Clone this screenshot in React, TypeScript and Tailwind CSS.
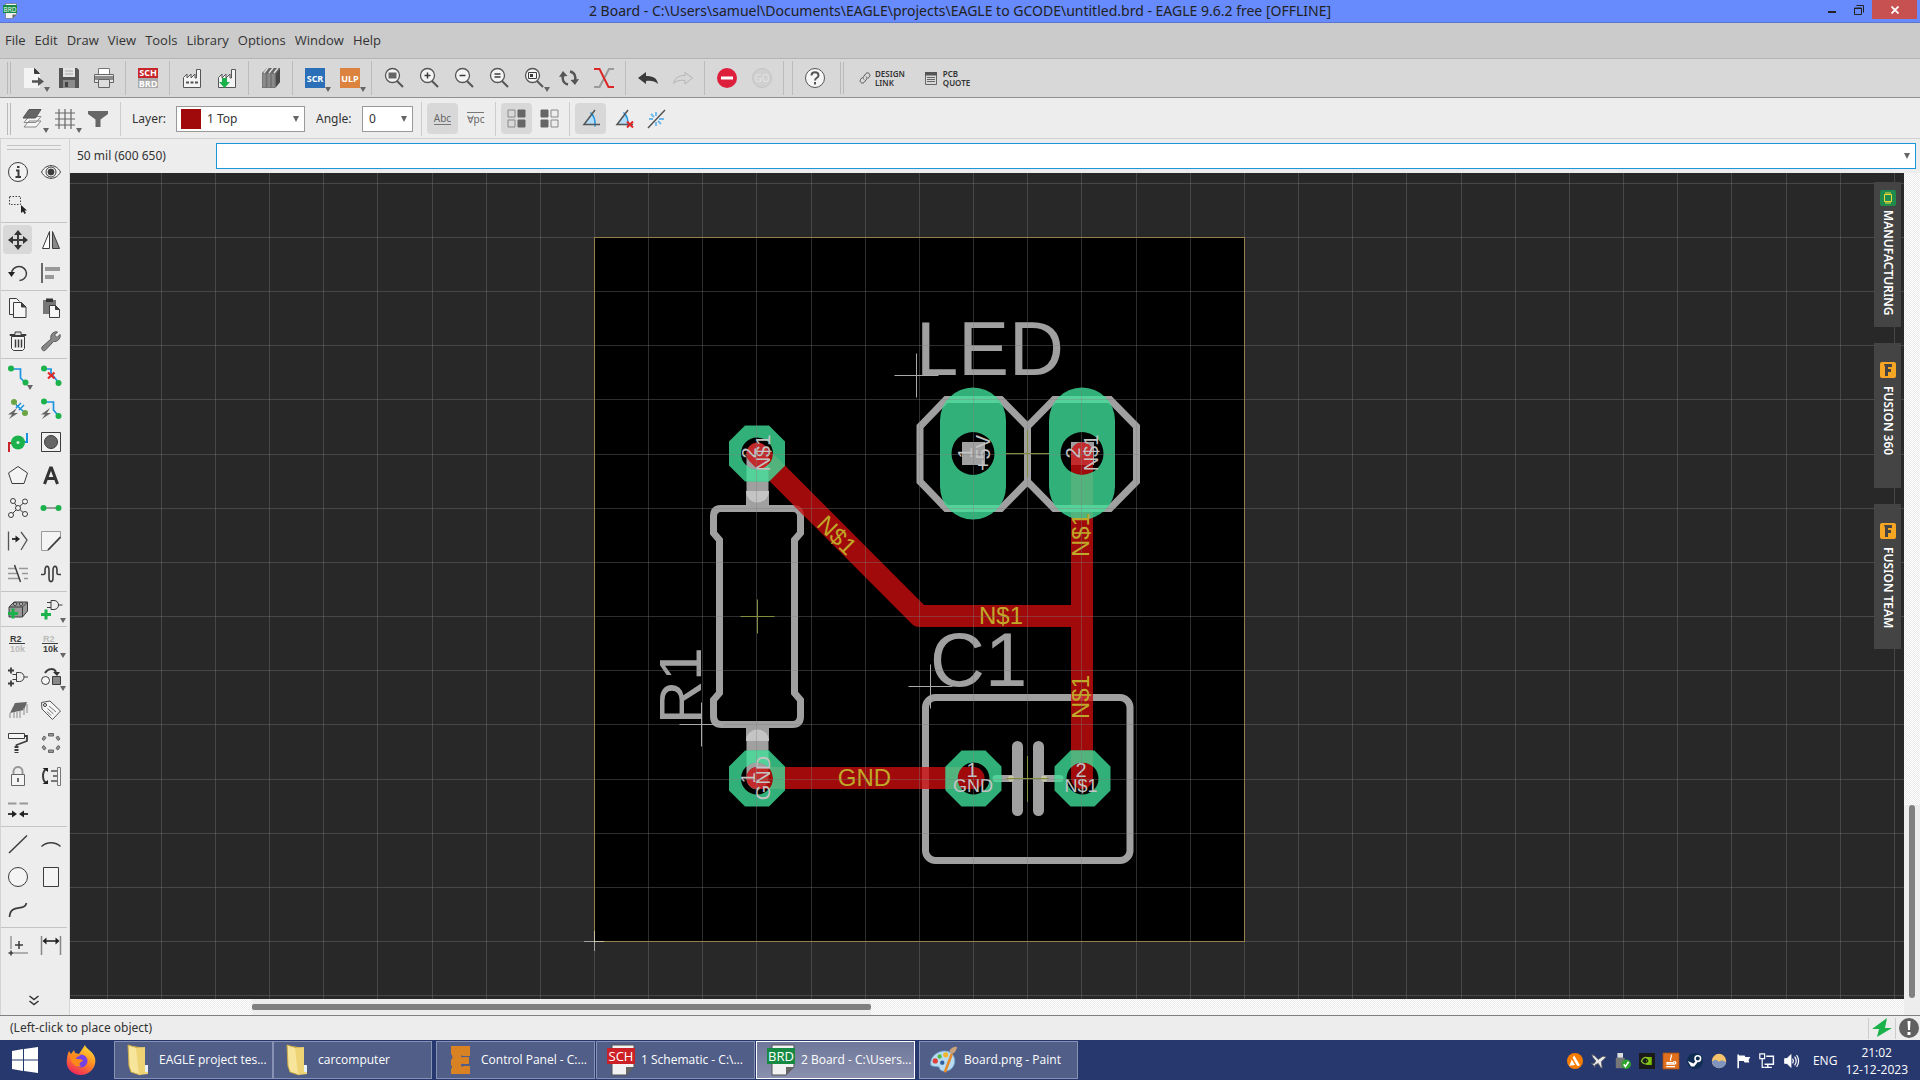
import React from "react";

type Kids = { children?: React.ReactNode };

const D = "#3c3c3c";
const G = "#1bb24b";
const B = "#1a93e0";

function Ic({ children, size = "size-5" }: Kids & { size?: string }) {
  return (
    <svg viewBox="0 0 20 20" className={`${size} shrink-0 overflow-visible`} fill="none" stroke={D} strokeWidth="1" aria-hidden="true">
      {children}
    </svg>
  );
}

function Tri({ x = 23, y = 20 }: { x?: number; y?: number }) {
  return <path d={`M${x - 3} ${y - 1}h6l-3 5z`} fill="#666" stroke="none" />;
}

/* ---------- top toolbar icons ---------- */

const magnifier = (
  <>
    <circle cx="8.5" cy="7.5" r="7" fill="#f4f4f4" stroke="#555" strokeWidth="1.3" />
    <path d="M13 13l6 6" stroke="#555" strokeWidth="2" />
  </>
);

const factory = <path d="M1.5 19.5V9.5L5 6v4l4-4v4l4-4v4h1.5V1.5h4v18z" fill="#f4f4f4" stroke="#555" />;

const fileIcons = [
  {
    name: "New",
    icon: (
      <Ic>
        <path d="M.5.5h10l5 5v14H.5z" fill="#f4f4f4" stroke="#f4f4f4" />
        <path d="M10.5.5l5 5h-5z" fill={D} />
        <path d="M8 13.5h7" stroke="#555" strokeWidth="2.5" />
        <path d="M14 9l6 4.5-6 4.5z" fill="#555" stroke="none" />
        <Tri />
      </Ic>
    ),
  },
  {
    name: "Save",
    icon: (
      <Ic>
        <path d="M0 0h18l2 2v18H0z" fill="#555" stroke="none" />
        <path d="M4 0h12v9H4z" fill="#e4e4e4" stroke="none" />
        <path d="M4 12h12v8H4z" fill="#8b8b8b" stroke="none" />
        <path d="M6 14h3v5H6z" fill="#444" stroke="none" />
        <path d="M6 3h8M6 6h8" stroke="#aaa" />
      </Ic>
    ),
  },
  {
    name: "Print",
    icon: (
      <Ic>
        <path d="M4.5 7V.5h11V7" fill="#fff" stroke="#777" />
        <path d="M.5 6.5h19v8H.5z" fill="#e8e8e8" stroke="#666" />
        <path d="M1 8h18v4H1z" fill="#8b8b8b" stroke="none" />
        <path d="M4.5 11.5h11v8h-11z" fill="#ddd" stroke="#666" />
      </Ic>
    ),
  },
];

const badge = (fill: string, label: string) => (
  <Ic>
    <path d="M0 0h20v20H0z" fill={fill} stroke="none" />
    <text x="10" y="14" textAnchor="middle" fontSize="9" fontWeight="bold" fill="#fff" stroke="none">
      {label}
    </text>
    <Tri />
  </Ic>
);

const topGroups: { name: string; icon: React.ReactNode }[][] = [
  fileIcons,
  [
    {
      name: "Schematic / Board",
      icon: (
        <Ic>
          <path d="M0 0h20v10H0z" fill="#c7252a" stroke="none" />
          <path d="M0 10h20v10H0z" fill="#aaa" stroke="none" />
          <g fill="#fff" stroke="none" fontSize="9" fontWeight="bold" textAnchor="middle">
            <text x="10" y="8">SCH</text>
            <text x="10" y="19">BRD</text>
          </g>
        </Ic>
      ),
    },
  ],
  [
    {
      name: "Manufacturing",
      icon: (
        <Ic>
          {factory}
          <path d="M4 14.5h12" stroke="#555" strokeWidth="2" strokeDasharray="3 1.5" />
        </Ic>
      ),
    },
    {
      name: "CAM",
      icon: (
        <Ic>
          {factory}
          <path d="M5 10h5v4h3l-5.5 6L2 14h3z" fill={G} stroke="none" />
        </Ic>
      ),
    },
  ],
  [
    {
      name: "Library",
      icon: (
        <Ic>
          <path d="M1 5l5-5h13v14l-5 6H1z" fill="#666" stroke="none" />
          <path d="M1.5 5.5h3.5v14H1.5zM6 5.5h3.5v14H6zM10.5 5.5H14v14h-3.5z" fill="#8b8b8b" stroke="#777" />
          <path d="M3 5l4-5M8 5l4-5M13 5l4-5" stroke="#ddd" strokeWidth="1.5" />
          <path d="M15 6l4-5v13l-4 5z" fill="#4a4a4a" stroke="none" />
        </Ic>
      ),
    },
  ],
  [
    { name: "Script", icon: badge("#2a6fb8", "SCR") },
    { name: "ULP", icon: badge("#dc8340", "ULP") },
  ],
  [
    {
      name: "Fit",
      icon: (
        <Ic>
          {magnifier}
          <path d="M4.5 4.5h8v6h-8z" fill="#666" stroke="none" />
        </Ic>
      ),
    },
    { name: "Zoom in", icon: <Ic>{magnifier}<path d="M5.5 7.5h6M8.5 4.5v6" strokeWidth="1.5" /></Ic> },
    { name: "Zoom out", icon: <Ic>{magnifier}<path d="M5.5 7.5h6" strokeWidth="1.5" /></Ic> },
    { name: "Redraw", icon: <Ic>{magnifier}<path d="M5.5 6h6M5.5 9h6" strokeWidth="1.5" /></Ic> },
    {
      name: "Select zoom",
      icon: (
        <Ic>
          {magnifier}
          <path d="M4.5 4.5h8v6h-8z" />
          <path d="M6 6h3v3H6z" fill={D} stroke="none" />
          <Tri />
        </Ic>
      ),
    },
    {
      name: "Refresh",
      icon: (
        <Ic>
          <path d="M9 16.5C4 15.5 3 11 4 7M11 3.5c5 1 6 5.5 5 9.5" stroke="#555" strokeWidth="2.5" />
          <path d="M0 9l4-6 4.5 5zM20 11l-4 6-4.5-5z" fill="#555" stroke="none" />
        </Ic>
      ),
    },
    {
      name: "Cross probe",
      icon: (
        <Ic>
          <path d="M20 1h-5L5.5 19H0" stroke="#999" strokeWidth="2" />
          <path d="M0 1h5.5l9 18H20" stroke="#dc2626" strokeWidth="2" />
        </Ic>
      ),
    },
  ],
  [
    {
      name: "Undo",
      icon: (
        <Ic>
          <path d="M0 10l8-6v4c7 0 11 2 12 8-3-3-7-3.5-12-3v3z" fill="#3a3a3a" stroke="none" />
        </Ic>
      ),
    },
    {
      name: "Redo",
      icon: (
        <Ic>
          <path d="M19.5 10L12 4.5v3C5 7.5 2 10 .5 15.5 4 12.5 7 12 12 12.5V16z" fill="#d6d6d6" stroke="#b5b5b5" />
        </Ic>
      ),
    },
  ],
  [
    {
      name: "Stop",
      icon: (
        <Ic>
          <circle cx="10" cy="10" r="10" fill="#de1f3c" stroke="none" />
          <path d="M4 10h12" stroke="#fff" strokeWidth="3" />
        </Ic>
      ),
    },
    {
      name: "Go",
      icon: (
        <Ic>
          <circle cx="10" cy="10" r="9.5" fill="#d0d0d0" stroke="#c4c4c4" />
          <text x="10" y="14" textAnchor="middle" fontSize="10" fill="#e4e4e4" stroke="none">GO</text>
        </Ic>
      ),
    },
  ],
];

const angleBase = (
  <>
    <path d="M3 15.5L10.5 5c3 3 4 6.5 4 10.5z" fill="#b4dcf7" stroke="none" />
    <path d="M9.5 3.5c4 3.5 5 8 4.5 14" stroke={B} strokeWidth="1.5" />
    <path d="M14 1L3 15.5h16" stroke="#555" strokeWidth="1.5" />
  </>
);

/* ---------- left palette ---------- */

const gate = <path d="M9 4.5h3c6 0 6 9 0 9H9zM5 6.5h4M5 11.5h4M16.5 9h4" />;
const plus = <path d="M0 14.5h10M5 9.5v10" stroke={G} strokeWidth="3" />;
const bolt = <path d="M9 9l-9 6.5h4L1 20l9-6H6z" fill="#666" stroke="none" />;

function Cell({ x, y }: { x: number; y: number }) {
  return <circle cx={x} cy={y} r="2.5" fill="#f4f4f4" />;
}
function Dot({ x, y, c = G }: { x: number; y: number; c?: string }) {
  return <circle cx={x} cy={y} r="3" fill={c} stroke="none" />;
}

type Tool = [string, React.ReactNode];
const palette: Tool[][] = [
  [
    ["Info", <><circle cx="10" cy="10" r="9.5" fill="#f2f2f2" /><path d="M8 8.5h2.5V15M7.5 15h5.5" strokeWidth="2" /><path d="M9 4h2.5v2H9z" fill={D} stroke="none" /></>],
    ["Show", <><path d="M.5 10C5 1.5 15 1.5 19.5 10 15 18.5 5 18.5.5 10z" fill="#f2f2f2" /><circle cx="10" cy="10" r="5" /><circle cx="10" cy="10" r="3" fill={D} /></>],
    ["Group", <><path d="M1.5 1.5h11v8h-11z" strokeDasharray="1.5 1.5" /><path d="M13 10v8l2-1.5L16.5 19l1.5-1-1.5-2.5H19z" fill="#222" stroke="none" /></>],
  ],
  [
    ["Move", <><path d="M2 10h16M10 2v16" strokeWidth="2" /><path d="M0 10l5-4v8zM20 10l-5-4v8zM10 0L6 5h8zM10 20l-4-5h8z" fill="#333" stroke="none" /></>],
    ["Mirror", <><path d="M8.5 1.5v17H1.5z" fill="#fff" /><path d="M11.5 1.5v17h7z" fill="#888" /></>],
    ["Rotate", <><path d="M3.5 10a7.5 7 0 1 1 8 7.5" strokeWidth="1.5" /><path d="M0 9h7l-3.5 5z" fill="#222" stroke="none" /></>],
    ["Align", <><path d="M1 0v20" strokeWidth="1.5" /><path d="M4 4h15v4H4zM4 12h9v4H4z" fill="#999" stroke="none" /></>],
  ],
  [
    ["Copy", <><path d="M7 16.5H1.5V.5h7l3 3" fill="#f6f6f6" /><path d="M5.5 4.5h8l4.5 4.5v10.5H5.5z" fill="#f6f6f6" /><path d="M13.5 4.5V9h4.5z" fill={D} /></>],
    ["Paste", <><path d="M2 2h13v14H2z" fill="#777" stroke="none" /><path d="M5 .5h7V4H5z" fill="#333" stroke="none" /><path d="M8.5 7.5h6l4 4v8h-10z" fill="#f6f6f6" /><path d="M14.5 7.5v4h4z" fill={D} /></>],
    ["Delete", <><path d="M3.5 5.5h13v12l-2 2h-9l-2-2z" fill="#f4f4f4" /><path d="M2 4.5h16v-1h-5V1H7v2.5H2z" fill="#ddd" /><path d="M7.5 8.5v8M10.5 8.5v8M13.5 8.5v8" strokeWidth="1.5" /></>],
    ["Change", <path d="M1 16l9-8c-1-4 2-8 6.5-7L13.5 4l2.5 2.5 3-3C20 8 16 11 12.5 10.5L4 19.5c-2 1-4-1.5-3-3.5z" fill="#888" stroke="#555" />],
  ],
  [
    ["Route", <><path d="M3 3h9.5v9l5 5" stroke={B} strokeWidth="1.7" /><Dot x={3} y={2.5} /><Dot x={17.5} y={16.5} /><Tri x={22} y={20} /></>],
    ["Ripup", <><path d="M3 3h7v4l7 9" stroke={B} strokeWidth="1.7" /><Dot x={3} y={2.5} /><Dot x={17.5} y={17} /><path d="M7 6.5l6.5 6M13.5 6.5l-6.5 6" stroke="#e02828" strokeWidth="2.2" /></>],
    ["Autoroute", <>{bolt}<path d="M6 3l11 11" stroke="#6aa443" /><Dot x={6} y={3} c="#6aa443" /><Dot x={17} y={14} c="#6aa443" /><path d="M8 9l5-5M11 11l5-5M8 6l7 6" stroke={B} strokeWidth="1.5" /></>],
    ["Quick route", <>{bolt}<path d="M3 3h9.5v8l5 6" stroke={B} strokeWidth="1.7" /><Dot x={3} y={2.5} /><Dot x={17.5} y={17} /></>],
    ["Via", <><path d="M1 20v-9h9" stroke="#c8252a" strokeWidth="2" /><path d="M10 10h9V1" stroke={B} strokeWidth="2" /><circle cx="10" cy="10.5" r="7" fill={G} stroke="none" /><circle cx="10" cy="10.5" r="1.5" fill="#d8f0de" stroke="none" /></>],
    ["Hole", <><path d="M.5.5h19v19H.5z" fill="#f2f2f2" /><circle cx="10" cy="10" r="6.5" fill="#666" /></>],
    ["Polygon", <path d="M10 1.5l9.5 6.5-3.5 10.5H4L.5 8z" fill="#f4f4f4" />],
    ["Text", <path d="M3.500 19L9.500 3h1L16.500 19M6 13.5h8" stroke="#333" strokeWidth="3" />],
    ["Ratsnest", <><path d="M5 3l5 7-7 7M17 3.5l-7 6.5 7 6" /><Cell x={5} y={3} /><Cell x={17} y={3.5} /><Cell x={10} y={10} /><Cell x={3} y={17} /><Cell x={17} y={16} /></>],
    ["Signal", <><path d="M3 10h14" stroke="#999" strokeWidth="2" /><Dot x={2.5} y={10} /><Dot x={17.5} y={10} /></>],
    ["Split", <><path d="M.5.5v19M13 1l6 8-6 10" stroke="#555" strokeWidth="1.3" /><path d="M4 8h5" strokeWidth="2" /><path d="M7.5 4.5L12 8l-4.5 3.5z" fill="#222" stroke="none" /></>],
    ["Miter", <><path d="M.5.5h19V7L7 19.5H.5z" fill="#f4f4f4" stroke="#999" /><path d="M19.5 6L7 19" strokeWidth="1.8" /></>],
    ["Optimize", <><path d="M0 4.5h7M0 9.5h9M0 14.5h12M11 4.5h9M14 9.5h6M16 14.5h4" stroke="#999" strokeWidth="1.3" /><path d="M6.5 1l6 17" strokeWidth="1.5" /></>],
    ["Meander", <path d="M0 10.500h2c2.500 0 2-1 2-4 0-5.500 4-5.500 4 0v7c0 5.500 4 5.500 4 0v-7c0-5.500 4-5.500 4 0 0 3-.5 4 2 4h2" strokeWidth="1.6" />],
  ],
  [
    ["Add part", <><path d="M1 8l5-5h13.5v9l-5 6H1z" fill="#999" /><path d="M14.5 18V8l5-5" /><path d="M1 8h13.5" /><circle cx="7" cy="5" r="1.5" fill="#ddd" /><circle cx="13" cy="5" r="1.5" fill="#ddd" />{plus}</>],
    ["Add gate", <><g transform="translate(1 -3)">{gate}</g><g transform="translate(0 1)">{plus}</g><Tri x={22} y={20} /></>],
  ],
  [
    ["Name", <><g fontSize="9" fontWeight="bold" stroke="none" className="font-['Liberation_Sans',sans-serif]"><text x="2" y="8" fill={D}>R2</text><text x="2" y="18" fill="#bbb">10k</text></g><path d="M1 9.5h16" /></>],
    ["Value", <><g fontSize="9" fontWeight="bold" stroke="none" className="font-['Liberation_Sans',sans-serif]"><text x="2" y="8" fill="#bbb">R2</text><text x="2" y="18" fill={D}>10k</text></g><path d="M1 9.5h16" /><Tri x={22} y={20} /></>],
    ["Smash", <><g transform="translate(-.5 1)">{gate}</g><path d="M0 3.5h6M3 .5v6M0 16.5h6M3 13.5v6" strokeWidth="1.8" /></>],
    ["Replace", <><circle cx="4.5" cy="13.5" r="4" fill="#f6f6f6" /><path d="M11.5 9.5h8v8h-8z" fill="#888" /><path d="M4 6c3-5 9-5 11-1" strokeWidth="2" /><path d="M12 5h7l-3 4z" fill="#333" stroke="none" /><Tri x={22} y={20} /></>],
    ["Package", <><path d="M2 13l5-10 12-1-3 8z" fill="#666" stroke="none" /><path d="M2 13v5M6 12v6M9 11.5V18M12 11v7M16 8v7M19 4v9" stroke="#aaa" strokeWidth="1.5" /></>],
    ["Attribute", <><path d="M.5 2.5L9 1l10.5 10-8 8.5L1 9z" fill="#f6f6f6" stroke="#555" /><circle cx="4" cy="5" r="1.5" /><path d="M8 6l7 6M6.5 8.5l6 5.5M6 11.5l4 4" stroke="#777" /></>],
    ["Paint roller", <><path d="M.5.5h16v5H.5z" fill="#f6f6f6" /><path d="M17 3h2v5L8.5 12v2" strokeWidth="1.8" /><path d="M8.5 13v7" strokeWidth="4" strokeDasharray="2 1" /></>],
    ["Array", <g fill="#999" stroke="#666"><path d="M7.5.5h5V3h-5zM7.5 17h5v2.5h-5z" /><path d="M1 6l2-3 2 1.5-2 3zM19 6l-2-3-2 1.5 2 3zM1 14l2 3 2-1.5-2-3zM19 14l-2 3-2-1.5 2-3z" /></g>],
    ["Lock", <><path d="M5.5 9V5.5c0-6 9-6 9 0V9" fill="none" stroke="#999" strokeWidth="2" /><path d="M3.5 8.5h13v11h-13z" fill="#f4f4f4" stroke="#666" /><path d="M10 12v4" strokeWidth="1.5" /></>],
    ["Pin swap", <><path d="M5 3c-4 3-4 11 0 14" strokeWidth="2" /><path d="M1.5 2H7v4zM1.5 18H7v-4z" fill="#222" stroke="none" /><path d="M16.5 1.5h3v18h-3z" fill="#f4f4f4" stroke="#777" /><path d="M10 5h6M12 10h4M10 15h6" stroke="#777" strokeWidth="1.8" /></>],
    ["Gap", <><path d="M0 4.5h8.5M11.5 4.5H20" stroke="#999" strokeWidth="1.8" /><path d="M0 15h5M20 15h-5" strokeWidth="1.8" /><path d="M4 11.5l5 3.5-5 3.5zM16 11.5L11 15l5 3.5z" fill="#222" stroke="none" /></>],
  ],
  [
    ["Line", <path d="M1 19L19 1.5" strokeWidth="1.5" />],
    ["Arc", <path d="M.5 12.5c5-5 14-5 19 0" strokeWidth="1.4" />],
    ["Circle", <circle cx="10" cy="10" r="9.5" fill="#f4f4f4" />],
    ["Rect", <path d="M2.5.5h15v19h-15z" fill="#f4f4f4" />],
    ["Spline", <path d="M1.5 17c1-14 15-5 17-14" strokeWidth="1.7" />],
  ],
  [
    ["Mark", <><path d="M3 1v13M6 18h14" stroke="#999" strokeWidth="1.5" /><path d="M.5 18h5M3 15.5v5M7 10h8M11 6v8" strokeWidth="1.5" /></>],
    ["Dimension", <><path d="M.5 1v19M19.5 1v19" stroke="#888" strokeWidth="1.5" /><path d="M3 6h14" strokeWidth="1.8" /><path d="M1.5 6l4-3.5v7zM18.5 6l-4-3.5v7z" fill="#222" stroke="none" /></>],
  ],
];

/* ---------- board drawing ---------- */

const X0 = 594.5;
const Y0 = 941.5;
const STEP = 54.16;
const columns = Array.from({ length: 36 }, (_, i) => i - 10);
const rows = Array.from({ length: 18 }, (_, i) => i - 2);

const octPad = (x: number, y: number) =>
  `M${x - 12} ${y - 28}h24l16 16v24l-16 16h-24l-16-16v-24zM${x - 16} ${y}a16 16 0 1 0 32 0a16 16 0 1 0 -32 0z`;
const longPad = (x: number, y: number) =>
  `M${x - 33} ${y - 33}a33 33 0 0 1 66 0v66a33 33 0 0 1 -66 0zM${x - 21.5} ${y}a21.5 21.5 0 1 0 43 0a21.5 21.5 0 1 0 -43 0z`;

const cross = (x: number, y: number, r: number) => `M${x - r} ${y}h${2 * r}M${x} ${y - r}v${2 * r}`;

function Board() {
  return (
    <svg viewBox="70 173 1834 826" preserveAspectRatio="xMidYMid slice" className="absolute inset-0 size-full bg-[#282828] font-['Liberation_Sans',sans-serif]" role="img" aria-label="Board layout">
      <defs>
        <g id="silk" fill="none" stroke="currentColor" strokeWidth="7">
          <path d="M721 508.5H793q7.5 0 7.5 8V533L794.5 540V693L800.5 700V716q0 8.5-8 8.5H721.5q-8 0-8-8.5V700L719.5 693V540L713.5 533V516.5q0-8 7.5-8z" />
          <path d="M946 399.5h55l26.5 27v55l-26.5 27h-55l-26-27v-55zM1054 399.5h56l26.5 27v55l-26.5 27h-56l-26.5-27v-55z" />
          <rect x="925.5" y="697.5" width="204.5" height="163" rx="10" />
          <path d="M757.5 454v37M757.5 778.5v-37" strokeWidth="22" strokeLinecap="round" />
          <path d="M757.5 491v14M757.5 741v-14" strokeWidth="23" />
          <path d="M1017.5 746.5v64M1038.5 746.5v64" strokeWidth="11" strokeLinecap="round" />
          <path d="M996 778.5h18M1042 778.5h18" strokeLinecap="round" />
          <path d="M962 442h23v23h-23zM1071 442h23v23h-23z" fill="currentColor" stroke="none" />
        </g>
        <g id="traces" fill="none" stroke="currentColor" strokeWidth="22" strokeLinecap="round" strokeLinejoin="round">
          <path d="M757.5 453.5L919.5 616H1082M1082 453.5V778M757.5 778H973.5" />
        </g>
        <path
          id="pads"
          fill="currentColor"
          fillRule="evenodd"
          d={[octPad(757, 453.5), octPad(757, 778.5), octPad(973.5, 778.5), octPad(1082.5, 778.5), longPad(973, 453.5), longPad(1082, 453.5)].join("")}
        />
        <mask id="onTraces" maskUnits="userSpaceOnUse" x="70" y="173" width="1834" height="826">
          <use href="#traces" className="text-white" />
        </mask>
        <mask id="onPads" maskUnits="userSpaceOnUse" x="70" y="173" width="1834" height="826">
          <use href="#pads" className="text-white" />
        </mask>
      </defs>

      <rect x={X0} y="237.5" width="650" height="704" fill="#000" />
      <use href="#silk" className="text-[#a0a0a0]" />
      <path d="M746 491h23a11.5 11.5 0 0 1-23 0zM746 741h23a11.5 11.5 0 0 0-23 0z" fill="#c4c4c4" />
      <g fill="#a0a0a0">
        <text x="916" y="375" fontSize="76">LED</text>
        <text x="930" y="686" fontSize="76">C1</text>
        <text transform="translate(701 724) rotate(-90)" fontSize="60">R1</text>
      </g>
      <use href="#traces" className="text-[#a00a0a]" />
      <g mask="url(#onTraces)">
        <use href="#silk" className="text-[#c22a2c]" />
      </g>
      <use href="#pads" className="text-[#32b07a]" />
      <g mask="url(#onPads)">
        <use href="#traces" className="text-[#52b47c]" />
        <use href="#silk" className="text-[#55d29a]" />
      </g>
      <g fill="#c8c8a8">
        <circle cx="1011" cy="778.5" r="3" />
        <circle cx="1044" cy="778.5" r="3" />
      </g>

      <g fill="#c0a828" fontSize="24" textAnchor="middle">
        <text x="864.5" y="786">GND</text>
        <text x="1001" y="624">N$1</text>
        <text transform="translate(1089 535) rotate(-90)">N$1</text>
        <text transform="translate(1089 697) rotate(-90)">N$1</text>
        <text transform="translate(831 541) rotate(45)">N$1</text>
      </g>

      <g fill="#c4c4c4" fontSize="20" textAnchor="middle">
        <text transform="translate(756 453) rotate(-90)">2</text>
        <text transform="translate(770 453) rotate(-90)">N$1</text>
        <text transform="translate(755 778) rotate(-90)">1</text>
        <text transform="translate(770 778) rotate(-90)">GND</text>
        <text transform="translate(972 453) rotate(-90)">1</text>
        <text transform="translate(990 453) rotate(-90)">+5V</text>
        <text transform="translate(1080 453) rotate(-90)">2</text>
        <text transform="translate(1098 453) rotate(-90)">N$1</text>
        <text x="972" y="777">1</text>
        <text x="973" y="792" fontSize="18">GND</text>
        <text x="1081" y="777">2</text>
        <text x="1081" y="792" fontSize="18">N$1</text>
      </g>

      <g stroke="#808080" strokeOpacity=".36" shapeRendering="crispEdges">
        {columns.map((i) => {
          const x = Math.floor(X0 + i * STEP) + 0.5;
          return <path key={i} d={`M${x} 173v826`} />;
        })}
        {rows.map((i) => {
          const y = Math.floor(Y0 - i * STEP) + 0.5;
          return <path key={i} d={`M70 ${y}h1834`} />;
        })}
      </g>
      <rect x={X0} y="237.5" width="650" height="704" fill="none" stroke="#94814a" />
      <path d={`${cross(757.5, 616.5, 17)}M1006 453.5h43M1027.5 430v47M1006 778.5h43M1027.5 756v46`} fill="none" stroke="#848e3c" />
      <path d={cross(916.5, 375.5, 22) + cross(930.5, 686.5, 22) + cross(701.5, 724.5, 22)} fill="none" stroke="#aaa" />
      <path d={cross(594.5, 941.5, 10)} fill="none" stroke="#fff" strokeDasharray="1 1" />
    </svg>
  );
}

/* ---------- shared pieces ---------- */

const hatch = "bg-[repeating-conic-gradient(#ffffff_0_25%,#ececec_0_50%)] bg-size-[2px_2px]";

function Grip({ gap = "mx-2" }: { gap?: string }) {
  return <span className={`${gap} h-8 w-1 shrink-0 border-x border-[#b8b8b8]`} />;
}
function Sep() {
  return <span className="mx-1 h-[34px] w-px shrink-0 bg-[#bcbcbc]" />;
}
function Btn({ label, on, w = "w-[35px]", children }: Kids & { label: string; on?: boolean; w?: string }) {
  return (
    <button type="button" aria-label={label} title={label} className={`flex h-[31px] shrink-0 items-center justify-center ${w}`}>
      <span className={`flex size-[31px] items-center justify-center rounded-sm ${on ? "bg-[#d8d8d8]" : ""}`}>{children}</span>
    </button>
  );
}
function Arrow() {
  return <span className="pointer-events-none absolute top-1/2 right-[6px] -translate-y-1/2 border-x-[3px] border-t-[6px] border-x-transparent border-t-[#666]" />;
}

function FileIcon({ color, label, size }: { color: string; label: string; size: string }) {
  return (
    <svg viewBox="0 0 28 32" className={`${size} shrink-0`} aria-hidden="true">
      <path d="M5 1h22v22l-8 8H5z" fill="#f2f2f2" stroke="#555" />
      <path d="M19 31v-8h8z" fill="#666" />
      <path d="M0 4h28v16H0z" fill={color} />
      <text x="14" y="17" textAnchor="middle" fontSize="13" fill="#fff" className="font-['Open_Sans',sans-serif]">{label}</text>
    </svg>
  );
}

const folder = (
  <svg viewBox="0 0 28 32" className="h-8 w-7 shrink-0" aria-hidden="true">
    <path d="M8 2l12 2v22l-7 4z" fill="#d9b74e" />
    <path d="M3 1l10 3 2 27-9-3L4 22z" fill="#f6e59a" stroke="#caa948" />
    <path d="M11 4l9-1v19l3 1v7l-9 1z" fill="#eed475" />
    <path d="M20 21h3v7h-3z" fill="#e8f0fa" />
  </svg>
);

const tasks = [
  { t: "EAGLE project tes...", i: folder, m: "" },
  { t: "carcomputer", i: folder, m: "" },
  {
    t: "Control Panel - C:...",
    m: "ml-1",
    i: (
      <svg viewBox="0 0 28 32" className="h-8 w-7 shrink-0" aria-hidden="true">
        <path d="M4 2h19v10h-6q-3 0-3-1v1q0 2 3 1h5v7h-5q-3-1-3 1v1q0 1 3 0h6v8H4v-5q2-2 0-4v-5q3-3 0-6z" fill="#d98223" />
      </svg>
    ),
  },
  { t: "1 Schematic - C:\\...", i: <FileIcon color="#cb2026" label="SCH" size="h-8 w-7" />, m: "ml-px" },
  { t: "2 Board - C:\\Users...", i: <FileIcon color="#168a42" label="BRD" size="h-8 w-7" />, m: "ml-px", on: true },
  {
    t: "Board.png - Paint",
    m: "ml-1",
    i: (
      <svg viewBox="0 0 32 32" className="h-8 w-7 shrink-0 overflow-visible" aria-hidden="true">
        <path d="M1 22C-1 12 10 4 20 6c10 3 11 16 3 21-5 3-11 2-12-1 0-4-5-1-10-4z" fill="#b9dcf2" stroke="#6fa6cf" />
        <circle cx="6" cy="17" r="3" fill="#e0403a" />
        <circle cx="11" cy="12" r="2.5" fill="#55b948" />
        <circle cx="18" cy="10" r="3" fill="#f4b62e" />
        <circle cx="14" cy="19" r="2.5" fill="#2f5f9c" />
        <path d="M17 30L25 9" stroke="#e58b2b" strokeWidth="3" />
        <path d="M22 6q3-6 9-5-1 6-6 8z" fill="#c9a27a" />
      </svg>
    ),
  },
];

const tray: Tool[] = [
  ["Avast", <g stroke="none"><circle cx="10" cy="10" r="10" fill="#f57c00" /><path d="M9 3l7 12c-1 2-3 1-4 0L7 6zM6 8l4 7-7 1z" fill="#fff" /></g>],
  ["Airplane", <path d="M1 2l3 1 5 5 6-4 4 1-6 6 1 8-2-1-3-5-4 2v3l-2-3-3-2h4l2-3-4-5z" fill="#e8e8e8" stroke="#555" />],
  ["Safely remove", <g stroke="none"><path d="M3 0h7v6H3z" fill="#ddd" /><path d="M1 6h11v13H1z" fill="#777" /><circle cx="14" cy="14" r="6" fill="#2fa32f" /><path d="M11 14l2 3 4-6" stroke="#fff" strokeWidth="2" /></g>],
  ["Nvidia", <g><path d="M0 0h20v20H0z" fill="#1a1a1a" stroke="none" /><path d="M9 5h7v10H9z" fill="#76b900" stroke="none" /><path d="M3 10c3-6 8-6 11 0-3 5-8 5-11 0z" stroke="#8fca2d" strokeWidth="1.5" /><path d="M6 10c1-3 4-3 5 0-1 2-4 2-5 0z" stroke="#1a1a1a" strokeWidth="1.5" /></g>],
  ["Java", <g><path d="M0 0h20v20H0z" fill="#e0701e" stroke="#a84e10" /><path d="M10 2c3 3-3 4 0 8M5 12h8v2H5zM4 17h11M13 11c4-1 4 3 0 3" stroke="#fff" strokeWidth="1.5" /></g>],
  ["Steam", <g stroke="none"><circle cx="10" cy="10" r="10" fill="#0f2d52" /><circle cx="13.5" cy="7" r="3.5" stroke="#fff" strokeWidth="2" /><path d="M1 10l7 3 3-3 2 2-4 5H5z" fill="#fff" /></g>],
  ["Weather", <g stroke="none"><circle cx="10" cy="10" r="9" fill="#f5c36b" /><path d="M1 11c3-3 6-3 9 0 4-3 7-1 9 1-2 9-15 10-18-1z" fill="#7f95bd" /></g>],
  ["Action center", <g><path d="M4 2v17" stroke="#fff" strokeWidth="2" /><path d="M5 3h7l1 2h6l-2 4 1 3h-6l-1-2H5z" fill="#fff" stroke="none" /></g>],
  ["Network", <g stroke="#fff"><path d="M9 4h9v10H7M11 14v4M7 18h9" strokeWidth="1.8" /><path d="M1 1h6v6H1zM4 7v11h3" strokeWidth="1.5" /></g>],
  ["Volume", <g stroke="#fff"><path d="M2 7h3l5-5v16l-5-5H2z" fill="#fff" /><path d="M12 7q2 3 0 6M14.5 4.5q4 5.5 0 11M17 2.5q5 7.5 0 15" strokeWidth="1.5" /></g>],
];

const sideTabs = [
  { t: "MANUFACTURING", pad: "gap-1 pt-2", mfg: true },
  { t: "FUSION 360", pad: "gap-2 pt-[19px]" },
  { t: "FUSION TEAM", pad: "gap-2 pt-[19px]" },
];

export default function App() {
  return (
    <div className="flex h-screen min-w-0 flex-col overflow-hidden bg-[#ededed] font-['Noto_Sans','Open_Sans',sans-serif] text-[12px] text-[#333]">
      <header className="relative flex h-[23px] shrink-0 items-center justify-center border-b border-[#5a76cf] bg-[#678afc]">
        <span className="absolute top-[3px] left-[3px]">
          <FileIcon color="#168a42" label="BRD" size="h-4 w-[14px]" />
        </span>
        <h1 className="text-[14px] leading-5 whitespace-nowrap text-[#222]">
          2 Board - C:\Users\samuel\Documents\EAGLE\projects\EAGLE to GCODE\untitled.brd - EAGLE 9.6.2 free [OFFLINE]
        </h1>
        <div className="absolute top-0 right-[3px] flex h-[19px]">
          <button type="button" aria-label="Minimize" className="flex w-[27px] items-center justify-center pt-1">
            <span className="h-0.5 w-2 bg-[#222]" />
          </button>
          <button type="button" aria-label="Restore" className="flex w-[27px] items-center justify-center">
            <svg viewBox="0 0 10 10" className="size-[10px]" fill="none" stroke="#222" aria-hidden="true">
              <path d="M.5 3h7v6.5h-7zM.5 3.5h7M2.5.5h7v7" />
            </svg>
          </button>
          <button type="button" aria-label="Close" className="flex w-[45px] items-center justify-center bg-[#c75050]">
            <svg viewBox="0 0 8 8" className="size-2" stroke="#fff" strokeWidth="1.8" aria-hidden="true">
              <path d="M.5.5l7 7M7.5.5l-7 7" />
            </svg>
          </button>
        </div>
      </header>

      <nav className="flex h-9 shrink-0 items-center gap-[9px] border-b border-[#b4b4b4] bg-[#cbcbcb] px-[5px] pt-px font-['Open_Sans',sans-serif]">
        {["File", "Edit", "Draw", "View", "Tools", "Library", "Options", "Window", "Help"].map((m) => (
          <button key={m} type="button" className="text-[13px]">{m}</button>
        ))}
      </nav>

      <div className="flex h-[39px] shrink-0 items-center border-b border-[#8f8f8f] bg-[#d8d8d8] font-['Open_Sans',sans-serif]">
        <Grip gap="ml-[7px] mr-[5px]" />
        {topGroups.map((g, i) => (
          <React.Fragment key={i}>
            {i > 0 && <Sep />}
            {g.map((b) => <Btn key={b.name} label={b.name}>{b.icon}</Btn>)}
          </React.Fragment>
        ))}
        <Sep />
        <Sep />
        <Btn label="Help">
          <Ic>
            <circle cx="10" cy="10" r="9.5" fill="#f6f6f6" stroke="#555" />
            <path d="M6.5 7.5c0-4.5 7-4.5 7 0 0 2.5-3.5 2-3.5 5M10 14v2.5" strokeWidth="2" stroke="#555" />
          </Ic>
        </Btn>
        <Grip gap="ml-2 mr-[15px]" />
        <button type="button" className="flex items-center gap-1 text-left text-[9px] leading-[9px] font-semibold">
          <svg viewBox="0 0 12 12" className="size-3" fill="none" stroke="#555" aria-hidden="true">
            <path d="M5 7.5C3.5 6 4 5 5 4l2-2.5c2-2 5 1 3.5 3L9 6.5M7 4.5c1.5 1.5 1 2.5 0 3.5l-2 2.5c-2 2-5-1-3.5-3L3 5.5" />
          </svg>
          <span className="font-['Noto_Sans',sans-serif] text-[8px]">DESIGN<br />LINK</span>
        </button>
        <button type="button" className="ml-5 flex items-center gap-[6px] text-left text-[9px] leading-[9px] font-semibold">
          <svg viewBox="0 0 12 13" className="h-[13px] w-3" fill="none" stroke="#666" aria-hidden="true">
            <path d="M.5.5h11v12H.5zM2 5.5h8M2 7.5h8M2 9.5h8" />
            <path d="M0 0h12v3.5H0z" fill="#555" stroke="none" />
          </svg>
          <span className="font-['Noto_Sans',sans-serif] text-[8px]">PCB<br />QUOTE</span>
        </button>
      </div>

      <div className="flex h-[41px] shrink-0 items-center border-b border-[#d0d0d0] bg-[#ededed] pt-px">
        <Grip gap="ml-[7px] mr-1" />
        <Btn label="Layer settings" w="w-[33px]">
          <Ic>
            <path d="M2 18l5-6h12l-5 6zM2 13.5l5-6h12l-5 6z" fill="#f6f6f6" stroke="#888" />
            <path d="M1 9l6-8.5h12L13.5 9z" fill="#666" stroke="#555" />
            <Tri x={24} />
          </Ic>
        </Btn>
        <Btn label="Grid" w="w-[33px]">
          <Ic>
            <path d="M4 0v20M10 0v20M16 0v20M0 4h20M0 10h20M0 16h20" stroke="#666" strokeWidth="1.2" />
            <Tri x={24} />
          </Ic>
        </Btn>
        <Btn label="Filter" w="w-[33px]">
          <Ic>
            <path d="M0 2h20v3l-7.5 5.5V18h-5v-7.5L0 5z" fill="#666" stroke="none" />
          </Ic>
        </Btn>
        <span className="mr-[11px] ml-[6px] h-[34px] w-px bg-[#ccc]" />
        <label htmlFor="layer" className="w-11 text-[12px]">Layer:</label>
        <div className="relative">
          <select id="layer" defaultValue="1 Top" className="h-[26px] w-[129px] appearance-none rounded-none border border-[#999] bg-white pl-[30px] text-[12px]">
            <option>1 Top</option>
          </select>
          <span className="pointer-events-none absolute top-[3px] left-[5px] size-5 bg-[#a00a0a]" />
          <Arrow />
        </div>
        <label htmlFor="angle" className="ml-[11px] w-[46px] text-[12px]">Angle:</label>
        <div className="relative">
          <select id="angle" defaultValue="0" className="h-[26px] w-[51px] appearance-none rounded-none border border-[#999] bg-white pl-[6px] text-[12px]">
            <option>0</option>
          </select>
          <Arrow />
        </div>
        <span className="mr-1 ml-2 h-[34px] w-px bg-[#ccc]" />
        <Btn label="Text upright" w="w-[33px]" on>
          <span className="border-b border-[#777] text-[10px] leading-3 text-[#666]">Abc</span>
        </Btn>
        <Btn label="Text spin" w="w-[33px]">
          <span className="border-t border-[#777] text-[10px] leading-3 text-[#666]">∀pc</span>
        </Btn>
        <span className="mr-1 ml-[3px] h-[34px] w-px bg-[#ccc]" />
        {[true, false].map((on) => (
          <Btn key={String(on)} label={on ? "Mirror off" : "Mirror on"} w="w-[33px]" on={on}>
            <Ic>
              <path d={on ? "M11 1h7v7h-7zM11 11h7v7h-7z" : "M1 1h7v7H1zM1 11h7v7H1z"} fill="#666" stroke="#666" />
              <path d={on ? "M1 1h7v7H1zM1 11h7v7H1z" : "M11 1h7v7h-7zM11 11h7v7h-7z"} stroke="#888" />
            </Ic>
          </Btn>
        ))}
        <span className="mr-1 ml-[3px] h-[34px] w-px bg-[#ccc]" />
        <Btn label="Angle snap" w="w-[33px]" on><Ic>{angleBase}</Ic></Btn>
        <Btn label="Angle snap off" w="w-[33px]">
          <Ic>{angleBase}<path d="M13 12.5l6 6M19 12.5l-6 6" stroke="#e02828" strokeWidth="2" /></Ic>
        </Btn>
        <Btn label="Ignore obstacles" w="w-[33px]">
          <Ic>
            <path d="M9 3v4M9 13v4M2 10h4M12 10h5M4 5l3 3M11 12l3 3" stroke="#6cb8ee" strokeWidth="1.8" />
            <path d="M1 19L18 1" stroke="#555" strokeWidth="1.5" />
          </Ic>
        </Btn>
      </div>

      <div className="flex min-h-0 flex-1">
        <aside className="flex w-[70px] shrink-0 flex-col border-r border-l border-[#d4d4d4] pr-[2px]">
          <div className="mx-[6px] mt-[6px] mb-[5px] h-[5px] border-y border-[#c4c4c4]" />
          {palette.map((group, i) => (
            <div key={i} className="grid shrink-0 grid-cols-2 border-b border-[#c4c4c4] pb-px last-of-type:border-b-0">
              {group.map(([name, art]) => (
                <button key={name} type="button" aria-label={name} title={name} className="flex h-[33px] items-center justify-center">
                  <span className={`flex size-[29px] items-center justify-center rounded-sm ${name === "Move" ? "bg-[#d8d8d8]" : ""}`}>
                    <Ic>{art}</Ic>
                  </span>
                </button>
              ))}
            </div>
          ))}
          <button type="button" aria-label="More tools" className="mt-auto mb-[9px] flex justify-center">
            <svg viewBox="0 0 10 11" className="h-[11px] w-[10px]" fill="none" stroke="#333" strokeWidth="1.5" aria-hidden="true">
              <path d="M.5 1L5 4.5 9.5 1M.5 6L5 9.5 9.5 6" />
            </svg>
          </button>
        </aside>

        <main className="flex min-w-0 flex-1 flex-col">
          <div className="flex h-[34px] shrink-0 items-center pr-1 pl-[7px]">
            <label htmlFor="cmd" className="w-[139px] shrink-0 text-[12px]">50 mil (600 650)</label>
            <div className="relative flex-1">
              <input id="cmd" type="text" className="block h-[26px] w-full border border-[#1a97d8] bg-white px-2 outline-none" />
              <Arrow />
            </div>
          </div>
          <div className="flex min-h-0 flex-1">
            <div className="flex min-w-0 flex-1 flex-col">
              <div className="relative min-h-0 flex-1 overflow-hidden">
                <Board />
                <div className="absolute top-[9px] right-[3px] flex flex-col gap-4">
                  {sideTabs.map((s) => (
                    <button key={s.t} type="button" className={`flex h-[145px] w-[27px] flex-col items-center bg-[#444] ${s.pad}`}>
                      <svg viewBox="0 0 16 16" className="size-4 shrink-0" aria-hidden="true">
                        <rect width="16" height="16" rx="2" fill={s.mfg ? "#1f8a4c" : "#f6a623"} />
                        {s.mfg ? (
                          <path d="M4.5 4.5h7v7h-7zM6 2v2M8 2v2M10 2v2M6 12v2M8 12v2M10 12v2" fill="#1f8a4c" stroke="#f0dc3c" />
                        ) : (
                          <path d="M4 2h8v3H8v2h3v3H8v4H5V5z" fill="#444" />
                        )}
                      </svg>
                      <span className="text-[12px] leading-4 font-semibold whitespace-nowrap text-white [writing-mode:vertical-rl]">{s.t}</span>
                    </button>
                  ))}
                </div>
              </div>
              <div className={`flex h-4 shrink-0 items-center ${hatch}`}>
                <span className="w-[9.9%]" />
                <span className="flex h-full w-[33.8%] items-center bg-[#ededed]">
                  <span className="h-[6px] w-full rounded-xs bg-[#808080]" />
                </span>
              </div>
            </div>
            <div className={`flex w-4 shrink-0 flex-col ${hatch}`}>
              <span className="h-[75%]" />
              <span className="flex h-[23%] justify-center bg-[#ededed]">
                <span className="w-[6px] rounded-sm bg-[#808080]" />
              </span>
              <span className="flex-1 bg-[#ededed]" />
            </div>
          </div>
        </main>
      </div>

      <div className="flex h-[25px] shrink-0 items-center border-t border-[#808080] pl-[10px]">
        <span className="flex-1 text-[12px]">(Left-click to place object)</span>
        <span className="h-[21px] w-px bg-[#ccc]" />
        <svg viewBox="0 0 20 20" className="mx-[3px] size-5" aria-hidden="true">
          <path d="M15 0L0 11h7l-2 8 15-9h-7z" fill={G} />
        </svg>
        <span className="h-[21px] w-px bg-[#ccc]" />
        <svg viewBox="0 0 20 20" className="mr-px ml-[3px] size-5" aria-hidden="true">
          <circle cx="10" cy="10" r="10" fill="#606060" />
          <path d="M8.5 3h3l-.5 9H9zM8.5 14h3v3h-3z" fill="#fff" />
        </svg>
      </div>

      <footer className="flex h-10 shrink-0 items-stretch bg-[#27386f] font-['Open_Sans',sans-serif] text-[12px] text-white">
        <button type="button" aria-label="Start" className="flex w-[50px] items-center justify-center">
          <svg viewBox="0 0 26 26" className="size-[26px]" fill="#fff" aria-hidden="true">
            <path d="M0 4l11-2v10.5H0zM12 2l14-2v12.5H12zM0 13.5h11V24L0 22zM12 13.5h14V26l-14-2z" />
          </svg>
        </button>
        <button type="button" aria-label="Firefox" className="mr-[18px] flex w-[46px] items-center justify-end">
          <svg viewBox="0 0 30 30" className="size-[30px]" aria-hidden="true">
            <defs>
              <linearGradient id="fox" x1=".8" y1="0" x2=".3" y2="1">
                <stop offset="0" stopColor="#ffe23c" />
                <stop offset=".45" stopColor="#ff9420" />
                <stop offset="1" stopColor="#f0235c" />
              </linearGradient>
            </defs>
            <path d="M3 6l2 3 3-4 1 3 4 1c2-3 4-6 6-9 1 4 8 6 10 13 2 9-5 17-14 17S-1 23 1 14c0-3 1-6 2-8z" fill="url(#fox)" />
            <circle cx="15" cy="16" r="6.5" fill="#7542e5" />
            <path d="M4 10c4-2 8-1 11 1-3 0-5 1-5 3 4 0 6 0 7 2-3 1-5 3-2 5-5 2-10-2-11-11z" fill="#ff8a1c" />
          </svg>
        </button>
        {tasks.map((k) => (
          <button
            key={k.t}
            type="button"
            className={`my-px flex w-[159px] shrink-0 items-center gap-[6px] border pl-[10px] text-left whitespace-nowrap ${k.m} ${k.on ? "border-white bg-linear-to-b from-[#6f789a] to-[#8a90ae]" : "border-[#8791b4] bg-[#515e88]"}`}
          >
            {k.i}
            {k.t}
          </button>
        ))}
        <div className="ml-auto flex items-center gap-2 pt-0.5">
          {tray.map(([name, art]) => (
            <button key={name} type="button" aria-label={name} title={name}>
              <Ic size="size-4">{art}</Ic>
            </button>
          ))}
          <span className="ml-[6px]">ENG</span>
          <time className="mr-3 text-center leading-[17px]">
            21:02
            <br />
            12-12-2023
          </time>
        </div>
      </footer>
    </div>
  );
}
